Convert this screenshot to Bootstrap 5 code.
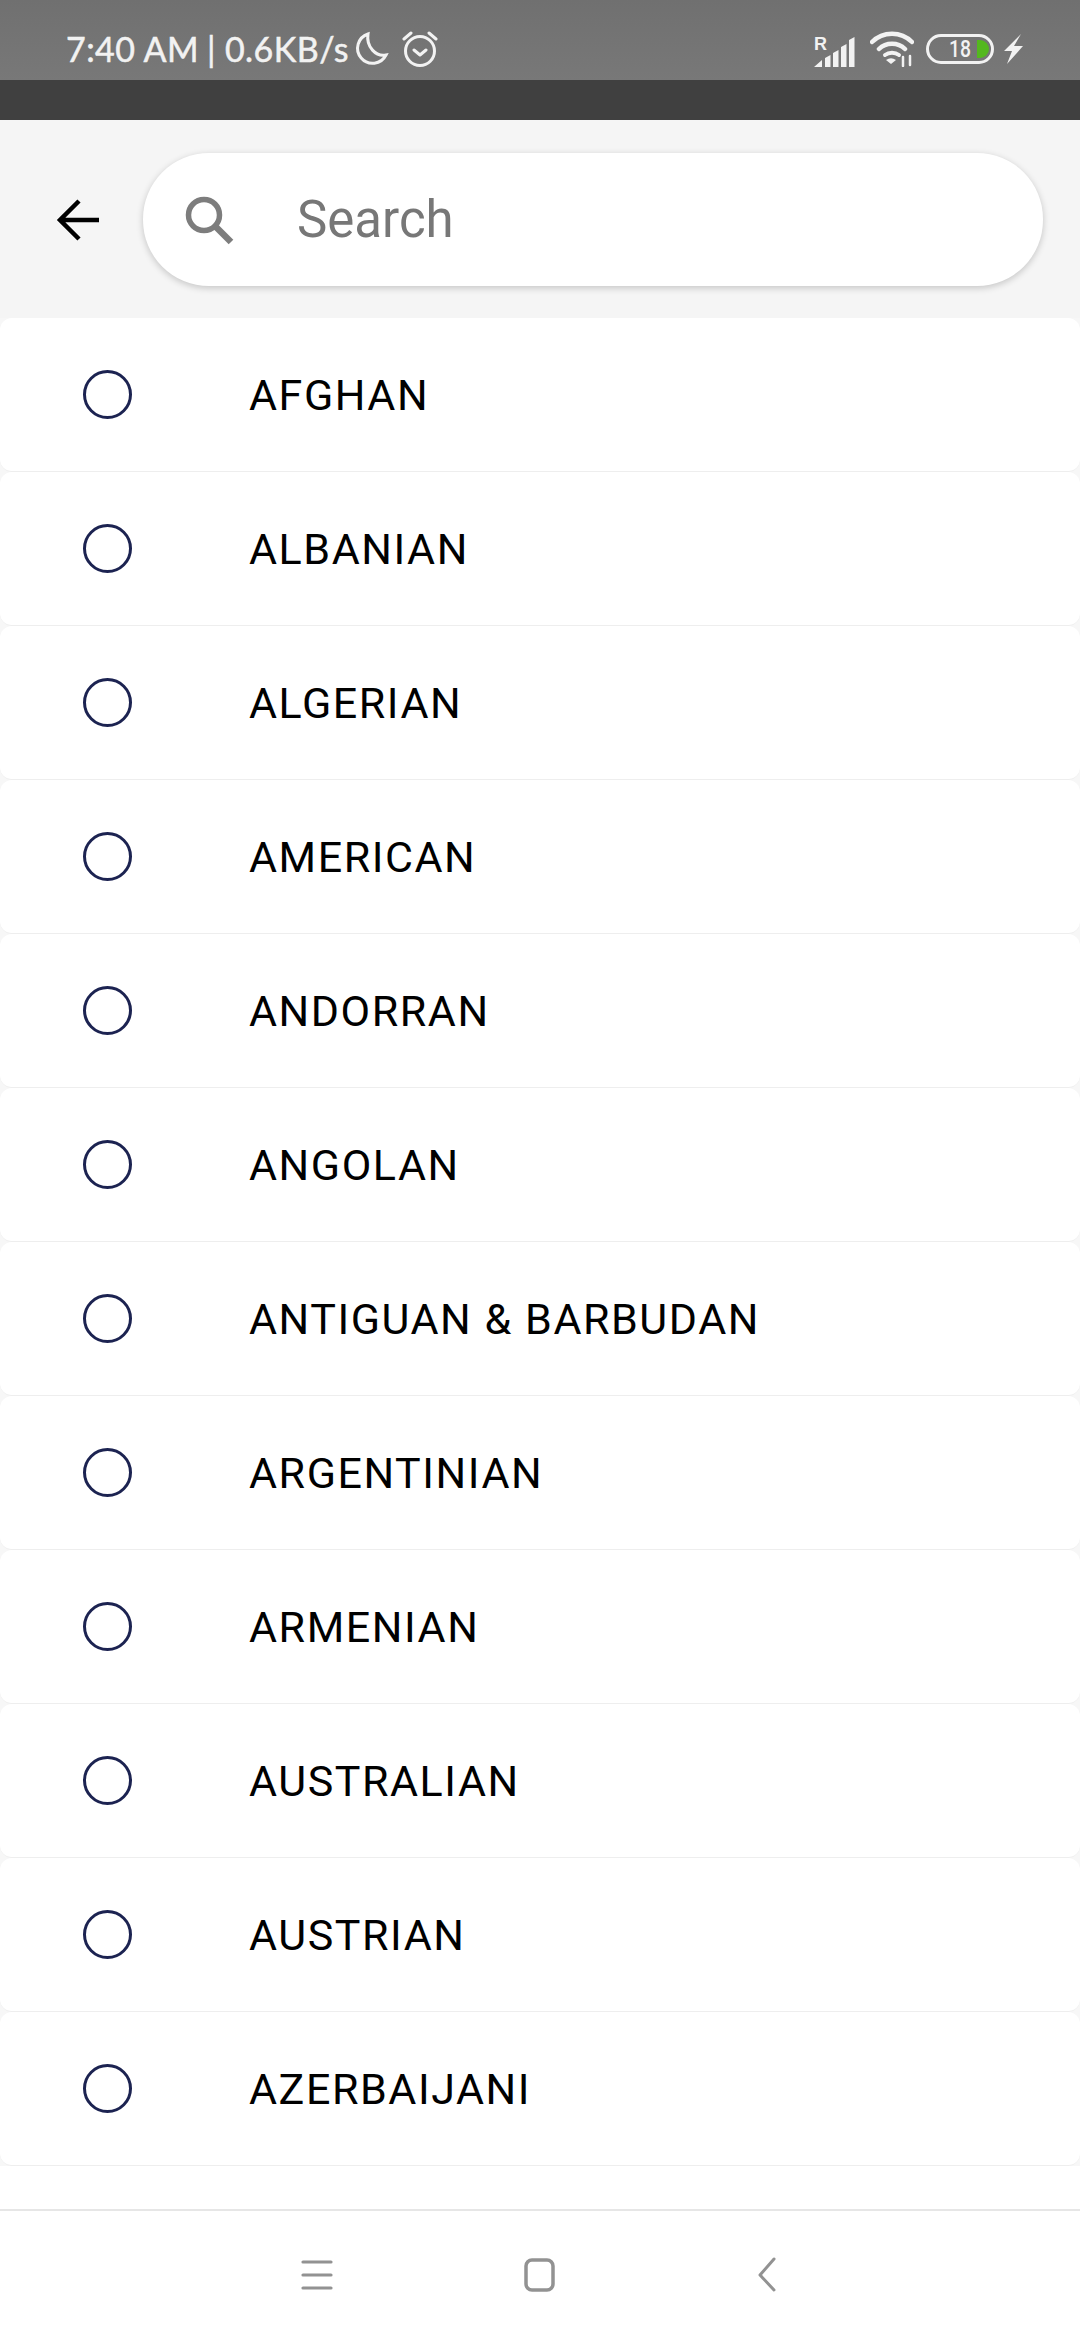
<!DOCTYPE html>
<html lang="en">
<head>
<meta charset="UTF-8" />
<title>Select Nationality</title>
<link href="https://cdn.jsdelivr.net/npm/bootstrap@5.3.2/dist/css/bootstrap.min.css" rel="stylesheet" />
<style>
  html, body { height: 2340px; overflow: hidden; }
  body { background: #fff; font-family: Roboto, "Liberation Sans", sans-serif; }
  .phone-status { height: 80px; background: linear-gradient(#707070, #787878); color: #f2f2f2; padding: 18px 56px 0 66px; font-family: Lato, "Open Sans", sans-serif; }
  .status-text { font-size: 34px; line-height: 1; white-space: nowrap; letter-spacing: .45px; -webkit-text-stroke: .5px #f2f2f2; }
  .status-sep { margin: 0 9px 0 8px; }
  .alarm-icon { margin-left: 13px; }
  .wifi-icon { margin-left: 14px; }
  .bat-icon { margin-left: 12px; }
  .bolt-icon { margin-left: 10px; }
  .dark-strip { height: 40px; background: #404040; }
  .search-head { height: 198px; background: #f5f5f5; padding: 33px 37px 32px 56px; }
  .back-icon { width: 44px; height: 44px; margin-right: 43px; flex: none; }
  .search-pill { height: 133px; border-radius: 66px; box-shadow: 0 2px 7px rgba(0,0,0,.2); padding-left: 41px; }
  .search-pill svg { width: 50px; height: 50px; margin-right: 63px; flex: none; }
  .search-word { font-size: 51px; color: #777; line-height: 1; }
  .nat-list { background: #f7f7f7; }
  .nat-row { height: 154px; padding: 2px 0 0 83px; background: #fff; border-radius: 12px; border-bottom: 1px solid #eee; }
  .nat-dot { width: 49px; height: 49px; border: 3px solid #1c2351; border-radius: 50%; margin-right: 117px; margin-top: -3px; flex: none; }
  .nat-name { font-size: 43px; letter-spacing: 1.55px; color: #000; line-height: 1; }
  .list-gap { height: 45px; background: #fff; border-bottom: 2px solid #e6e6e6; }
  .soft-keys { height: 129px; }
  .soft-keys svg { position: absolute; top: 2256px; width: 40px; height: 40px; }
</style>
</head>
<body>

<div class="phone-status d-flex align-items-center justify-content-between">
  <div class="d-flex align-items-center">
    <span class="status-text">7:40 AM<span class="status-sep">|</span>0.6KB/s</span>
    <svg class="ms-1" width="36" height="36" viewBox="0 0 36 36" fill="none" stroke="#f2f2f2" stroke-width="3"><path d="M15 3a15 15 0 1 0 18 21c-10 2-20-8-18-21z"/></svg>
    <svg class="alarm-icon" width="36" height="38" viewBox="0 0 36 38" fill="none" stroke="#f2f2f2" stroke-width="3" stroke-linecap="round" stroke-linejoin="round"><circle cx="18" cy="21" r="14.5"/><path d="M12 20l6 5 6-5M2 9l7-6M34 9l-7-6"/></svg>
  </div>
  <div class="d-flex align-items-center">
    <svg width="42" height="40" viewBox="0 -8 42 40" fill="#f2f2f2"><text x="0" y="13" font-family="Liberation Sans, sans-serif" font-size="18" font-weight="700">R</text><path d="M0 30l8-7v7zM11 21l5.5-3v12H11zM19 16l5.5-3v17H19zM27 10l5.5-3v23H27zM35 3l5.5-3v30H35z"/></svg>
    <svg class="wifi-icon" width="44" height="36" viewBox="0 0 44 36" fill="none" stroke="#f2f2f2" stroke-width="4.5" stroke-linecap="round"><path d="M2 11c11-11 29-11 40 0M9 18c7-7 19-7 26 0"/><path d="M15 24c4-3 10-3 14 0" stroke-width="4"/><path d="M16 29q5-3.5 10 0l-5 4z" fill="#f2f2f2" stroke="none"/><path d="M33 26v9M40 25v9" stroke-width="2.5"/></svg>
    <svg class="bat-icon" width="68" height="30" viewBox="0 0 68 30"><rect x="1.5" y="1.5" width="65" height="27" rx="13.5" fill="none" stroke="#f2f2f2" stroke-width="3"/><text x="23" y="23" fill="#f2f2f2" font-family="Roboto, sans-serif" font-size="24" font-weight="500" textLength="22" lengthAdjust="spacingAndGlyphs">18</text><path d="M51 6h3a9 9 0 0 1 0 18h-3z" fill="#54b81f"/></svg>
    <svg class="bolt-icon" width="20" height="30" viewBox="0 0 20 30" fill="#f2f2f2"><path d="M17 0L0 17h8L3 30l16-18h-9z"/></svg>
  </div>
</div>
<div class="dark-strip"></div>

<div class="search-head d-flex align-items-center">
  <svg class="back-icon" viewBox="0 0 44 44" fill="none" stroke="#000" stroke-width="4.5"><path d="M43 22H4M23 3L4 22l19 19"/></svg>
  <div class="search-pill flex-grow-1 bg-white d-flex align-items-center">
    <svg viewBox="0 0 50 50" fill="none" stroke="#7d7d7d" stroke-width="5.5"><circle cx="20" cy="20" r="15.5"/><path d="M31 31l16 16" stroke-width="6.5"/></svg>
    <span class="search-word">Search</span>
  </div>
</div>

<div class="nat-list" id="natList"></div>
<div class="list-gap"></div>

<div class="soft-keys bg-white">
  <svg style="left:301px" viewBox="0 0 40 40" fill="none" stroke="#929292" stroke-width="3.2" stroke-linecap="round"><path d="M2 6h28M2 19h28M2 32h28"/></svg>
  <svg style="left:523px" viewBox="0 0 40 40" fill="none" stroke="#929292" stroke-width="3.5"><rect x="3" y="4" width="27" height="30" rx="6"/></svg>
  <svg style="left:755px" viewBox="0 0 40 40" fill="none" stroke="#929292" stroke-width="3" stroke-linecap="round" stroke-linejoin="round"><path d="M19 3L5 19l14 15"/></svg>
</div>

<script>
  const names = ['AFGHAN', 'ALBANIAN', 'ALGERIAN', 'AMERICAN', 'ANDORRAN', 'ANGOLAN', 'ANTIGUAN & BARBUDAN', 'ARGENTINIAN', 'ARMENIAN', 'AUSTRALIAN', 'AUSTRIAN', 'AZERBAIJANI'];
  const list = document.getElementById('natList');
  names.forEach(name => {
    const row = document.createElement('div');
    row.className = 'nat-row d-flex align-items-center';
    row.innerHTML = '<span class="nat-dot"></span><span class="nat-name"></span>';
    row.querySelector('.nat-name').textContent = name;
    list.appendChild(row);
  });
</script>
<script src="https://cdn.jsdelivr.net/npm/bootstrap@5.3.2/dist/js/bootstrap.bundle.min.js"></script>
</body>
</html>
